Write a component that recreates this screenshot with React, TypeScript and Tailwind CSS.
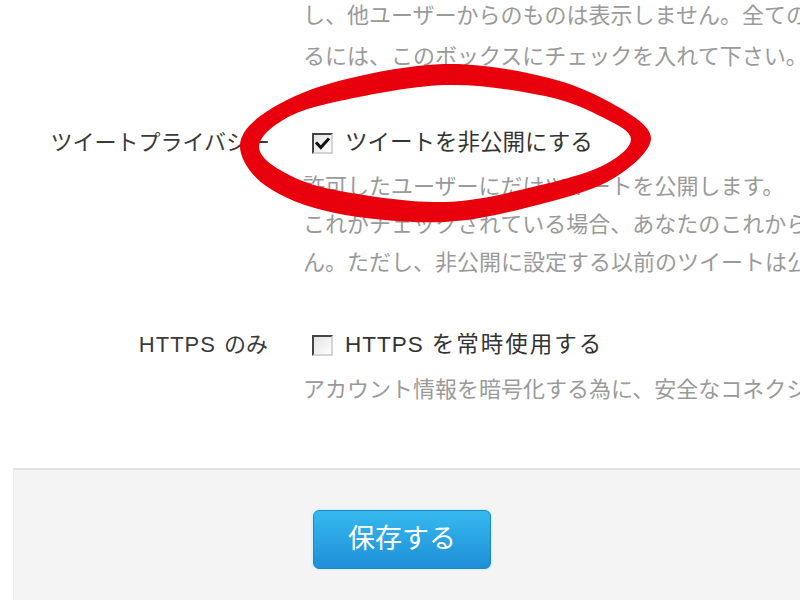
import React from "react";

const font = {
  fontFamily: '"Liberation Sans", "Noto Sans CJK JP", sans-serif',
};

type Pt = [number, number];

// closed smooth curve through the points (Catmull-Rom -> cubic bezier)
function loop(pts: Pt[]) {
  const n = pts.length;
  let d = `M${pts[0][0]} ${pts[0][1]}`;
  for (let i = 0; i < n; i++) {
    const p0 = pts[(i - 1 + n) % n];
    const p1 = pts[i];
    const p2 = pts[(i + 1) % n];
    const p3 = pts[(i + 2) % n];
    const c1x = p1[0] + (p2[0] - p0[0]) / 6;
    const c1y = p1[1] + (p2[1] - p0[1]) / 6;
    const c2x = p2[0] - (p3[0] - p1[0]) / 6;
    const c2y = p2[1] - (p3[1] - p1[1]) / 6;
    d += ` C${c1x} ${c1y} ${c2x} ${c2y} ${p2[0]} ${p2[1]}`;
  }
  return d + " Z";
}

const outer: Pt[] = [
  [240, 146],
  [266, 112],
  [335, 82],
  [445, 64],
  [545, 77],
  [613, 104],
  [651, 138],
  [614, 178],
  [545, 203],
  [445, 222],
  [335, 213],
  [266, 186],
];

const inner: Pt[] = [
  [259, 146],
  [283, 120],
  [335, 102],
  [445, 85],
  [545, 96],
  [604, 118],
  [631, 139],
  [606, 164],
  [545, 184],
  [445, 202],
  [335, 190],
  [280, 170],
];

function Checkbox({ checked }: { checked?: boolean }) {
  return (
    <span className="ml-[9px] flex h-[21px] w-[21px] shrink-0 items-center justify-center border-2 border-t-[#444] border-l-[#444] border-r-[#d4d4d4] border-b-[#d4d4d4] bg-gradient-to-br from-[#e2e2e2] to-white">
      {checked && (
        <svg width="15" height="13" viewBox="0 0 15 13">
          <path
            d="M2 6.5 L5.8 10.5 L13 2.5"
            fill="none"
            stroke="#111"
            strokeWidth="3"
            strokeLinecap="square"
          />
        </svg>
      )}
    </span>
  );
}

function Circle() {
  return (
    <svg
      className="pointer-events-none absolute inset-0"
      width="800"
      height="600"
      viewBox="0 0 800 600"
    >
      <path d={loop(outer) + " " + loop(inner)} fill="#e8000c" fillRule="evenodd" />
    </svg>
  );
}

export default function App() {
  return (
    <div
      className="relative h-[600px] w-[800px] overflow-hidden bg-white text-[22px]"
      style={font}
    >
      {/* tail of the previous setting */}
      <div className="-mt-[5px] ml-[303px] whitespace-nowrap leading-[41px] text-[#9a9a9a]">
        <p>し、他ユーザーからのものは表示しません。全てのツイートを表示す</p>
        <p>るには、このボックスにチェックを入れて下さい。</p>
      </div>

      {/* Tweet privacy */}
      <div className="mt-[47px] grid grid-cols-[270px_1fr] gap-x-[33px]">
        <p className="whitespace-nowrap text-right leading-[38px] text-[#3a3a3a]">
          ツイートプライバシー
        </p>
        <div className="min-w-0">
          <label className="flex h-[38px] items-center gap-[12px] whitespace-nowrap text-[22.5px] text-[#333]">
            <Checkbox checked />
            <span>ツイートを非公開にする</span>
          </label>
          <div className="mt-[6px] whitespace-nowrap leading-[38px] text-[#9a9a9a]">
            <p>許可したユーザーにだけツイートを公開します。</p>
            <p>これがチェックされている場合、あなたのこれからのツイートは公開されませ</p>
            <p>ん。ただし、非公開に設定する以前のツイートは公開されたままとなります。</p>
          </div>
        </div>
      </div>

      {/* HTTPS only */}
      <div className="mt-[44px] grid grid-cols-[270px_1fr] gap-x-[33px]">
        <p className="whitespace-nowrap pr-[2px] text-right leading-[38px] text-[#3a3a3a]">
          <span className="mr-[8px] tracking-[1px]">HTTPS</span>のみ
        </p>
        <div className="min-w-0">
          <label className="flex h-[38px] items-center gap-[12px] whitespace-nowrap text-[22.5px] text-[#333]">
            <Checkbox />
            <span>
              <span className="mr-[8px] tracking-[1px]">HTTPS</span>
              <span className="tracking-[2px]">を常時使用する</span>
            </span>
          </label>
          <div className="mt-[7px] whitespace-nowrap leading-[38px] text-[#9a9a9a]">
            <p>アカウント情報を暗号化する為に、安全なコネクションを使用します。</p>
          </div>
        </div>
      </div>

      {/* Save area */}
      <div className="ml-[13px] mt-[59px] h-[200px] border-t-2 border-l border-t-[#e2e2e2] border-l-[#eeeeee] bg-[#f4f4f4] pt-[40px]">
        <button className="ml-[299px] flex h-[59px] w-[178px] items-center justify-center rounded-[6px] border border-[#1d86c8] bg-gradient-to-b from-[#36b9ef] to-[#1f8fd7] text-[27px] text-white shadow-[0_0_0_2px_#e4f2fa]">
          保存する
        </button>
      </div>

      <Circle />
    </div>
  );
}
